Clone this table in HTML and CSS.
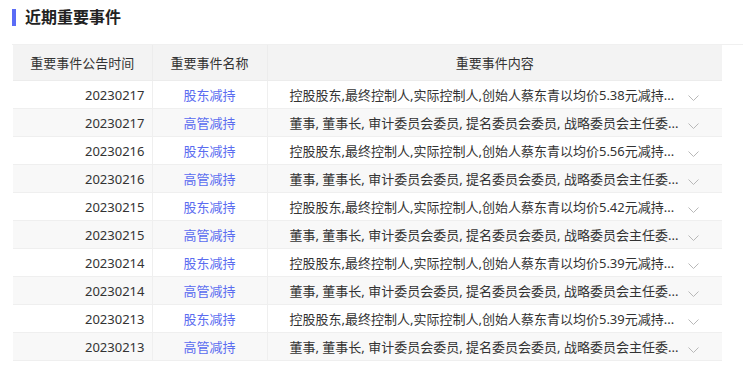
FILE: index.html
```html
<!DOCTYPE html>
<html lang="zh-CN">
<head>
<meta charset="utf-8">
<title>近期重要事件</title>
<link rel="stylesheet" href="styles.css">
</head>
<body>
<div class="section">
  <h2 class="title"><span class="bar"></span>近期重要事件</h2>
  <div class="table-wrap">
    <table class="events">
      <colgroup><col class="c1"><col class="c2"><col class="c3"></colgroup>
      <thead>
        <tr><th>重要事件公告时间</th><th>重要事件名称</th><th>重要事件内容</th></tr>
      </thead>
      <tbody>
        <tr><td class="date">20230217</td><td class="name">股东减持</td><td class="content"><div class="cell"><span class="text">控股股东,最终控制人,实际控制人,创始人蔡东青以均价5.38元减持...</span><svg class="chev" width="11" height="6" viewBox="0 0 11 6"><polyline points="0.5,0.5 5.5,5.5 10.5,0.5" fill="none" stroke="#b8b8b8" stroke-width="1"/></svg></div></td></tr>
        <tr><td class="date">20230217</td><td class="name">高管减持</td><td class="content"><div class="cell"><span class="text">董事, 董事长, 审计委员会委员, 提名委员会委员, 战略委员会主任委...</span><svg class="chev" width="11" height="6" viewBox="0 0 11 6"><polyline points="0.5,0.5 5.5,5.5 10.5,0.5" fill="none" stroke="#b8b8b8" stroke-width="1"/></svg></div></td></tr>
        <tr><td class="date">20230216</td><td class="name">股东减持</td><td class="content"><div class="cell"><span class="text">控股股东,最终控制人,实际控制人,创始人蔡东青以均价5.56元减持...</span><svg class="chev" width="11" height="6" viewBox="0 0 11 6"><polyline points="0.5,0.5 5.5,5.5 10.5,0.5" fill="none" stroke="#b8b8b8" stroke-width="1"/></svg></div></td></tr>
        <tr><td class="date">20230216</td><td class="name">高管减持</td><td class="content"><div class="cell"><span class="text">董事, 董事长, 审计委员会委员, 提名委员会委员, 战略委员会主任委...</span><svg class="chev" width="11" height="6" viewBox="0 0 11 6"><polyline points="0.5,0.5 5.5,5.5 10.5,0.5" fill="none" stroke="#b8b8b8" stroke-width="1"/></svg></div></td></tr>
        <tr><td class="date">20230215</td><td class="name">股东减持</td><td class="content"><div class="cell"><span class="text">控股股东,最终控制人,实际控制人,创始人蔡东青以均价5.42元减持...</span><svg class="chev" width="11" height="6" viewBox="0 0 11 6"><polyline points="0.5,0.5 5.5,5.5 10.5,0.5" fill="none" stroke="#b8b8b8" stroke-width="1"/></svg></div></td></tr>
        <tr><td class="date">20230215</td><td class="name">高管减持</td><td class="content"><div class="cell"><span class="text">董事, 董事长, 审计委员会委员, 提名委员会委员, 战略委员会主任委...</span><svg class="chev" width="11" height="6" viewBox="0 0 11 6"><polyline points="0.5,0.5 5.5,5.5 10.5,0.5" fill="none" stroke="#b8b8b8" stroke-width="1"/></svg></div></td></tr>
        <tr><td class="date">20230214</td><td class="name">股东减持</td><td class="content"><div class="cell"><span class="text">控股股东,最终控制人,实际控制人,创始人蔡东青以均价5.39元减持...</span><svg class="chev" width="11" height="6" viewBox="0 0 11 6"><polyline points="0.5,0.5 5.5,5.5 10.5,0.5" fill="none" stroke="#b8b8b8" stroke-width="1"/></svg></div></td></tr>
        <tr><td class="date">20230214</td><td class="name">高管减持</td><td class="content"><div class="cell"><span class="text">董事, 董事长, 审计委员会委员, 提名委员会委员, 战略委员会主任委...</span><svg class="chev" width="11" height="6" viewBox="0 0 11 6"><polyline points="0.5,0.5 5.5,5.5 10.5,0.5" fill="none" stroke="#b8b8b8" stroke-width="1"/></svg></div></td></tr>
        <tr><td class="date">20230213</td><td class="name">股东减持</td><td class="content"><div class="cell"><span class="text">控股股东,最终控制人,实际控制人,创始人蔡东青以均价5.39元减持...</span><svg class="chev" width="11" height="6" viewBox="0 0 11 6"><polyline points="0.5,0.5 5.5,5.5 10.5,0.5" fill="none" stroke="#b8b8b8" stroke-width="1"/></svg></div></td></tr>
        <tr><td class="date">20230213</td><td class="name">高管减持</td><td class="content"><div class="cell"><span class="text">董事, 董事长, 审计委员会委员, 提名委员会委员, 战略委员会主任委...</span><svg class="chev" width="11" height="6" viewBox="0 0 11 6"><polyline points="0.5,0.5 5.5,5.5 10.5,0.5" fill="none" stroke="#b8b8b8" stroke-width="1"/></svg></div></td></tr>
      </tbody>
    </table>
  </div>
</div>
</body>
</html>
```

FILE: styles.css
```css
html, body {
  margin: 0;
  padding: 0;
  background: #ffffff;
}

body {
  font-family: "Noto Sans", "Noto Sans CJK SC", sans-serif;
  color: #333333;
  font-size: 13px;
}

.section {
  padding: 9px 0 0 12px;
}

.title {
  display: flex;
  align-items: center;
  margin: 0;
  height: 17px;
  font-size: 16px;
  font-weight: bold;
  color: #222222;
  line-height: 17px;
}

.bar {
  width: 4px;
  height: 17px;
  background: #5b6cf6;
  margin-right: 9px;
}

.table-wrap {
  margin-top: 18px;
  padding-left: 1px;
  border-top: 1px solid #f0f0f0;
}

.events {
  width: 709px;
  border-collapse: collapse;
  table-layout: fixed;
}

.c1 { width: 139px; }
.c2 { width: 115px; }
.c3 { width: 455px; }

.events th {
  height: 35px;
  background: #f3f3f3;
  font-weight: normal;
  color: #333333;
  text-align: center;
  padding: 0;
  border-right: 1px solid #ececec;
  border-bottom: 1px solid #ececec;
  line-height: 18px;
}

.events th:last-child {
  border-right: none;
}

.events td {
  height: 27px;
  padding: 0;
  border-right: 1px solid #efefef;
  border-bottom: 1px solid #efefef;
  line-height: 18px;
  white-space: nowrap;
}

.events td:last-child {
  border-right: none;
}

.events tbody tr:nth-child(even) td {
  background: #f8f8f8;
}

.date {
  text-align: right;
  padding-right: 7px !important;
  color: #333333;
}

.name {
  text-align: center;
  color: #5a6cf0;
}

.cell {
  display: flex;
  align-items: center;
  padding: 0 23px 0 22px;
}

.text {
  color: #333333;
}

.chev {
  margin-left: auto;
  margin-top: 7px;
  flex: none;
}
```
